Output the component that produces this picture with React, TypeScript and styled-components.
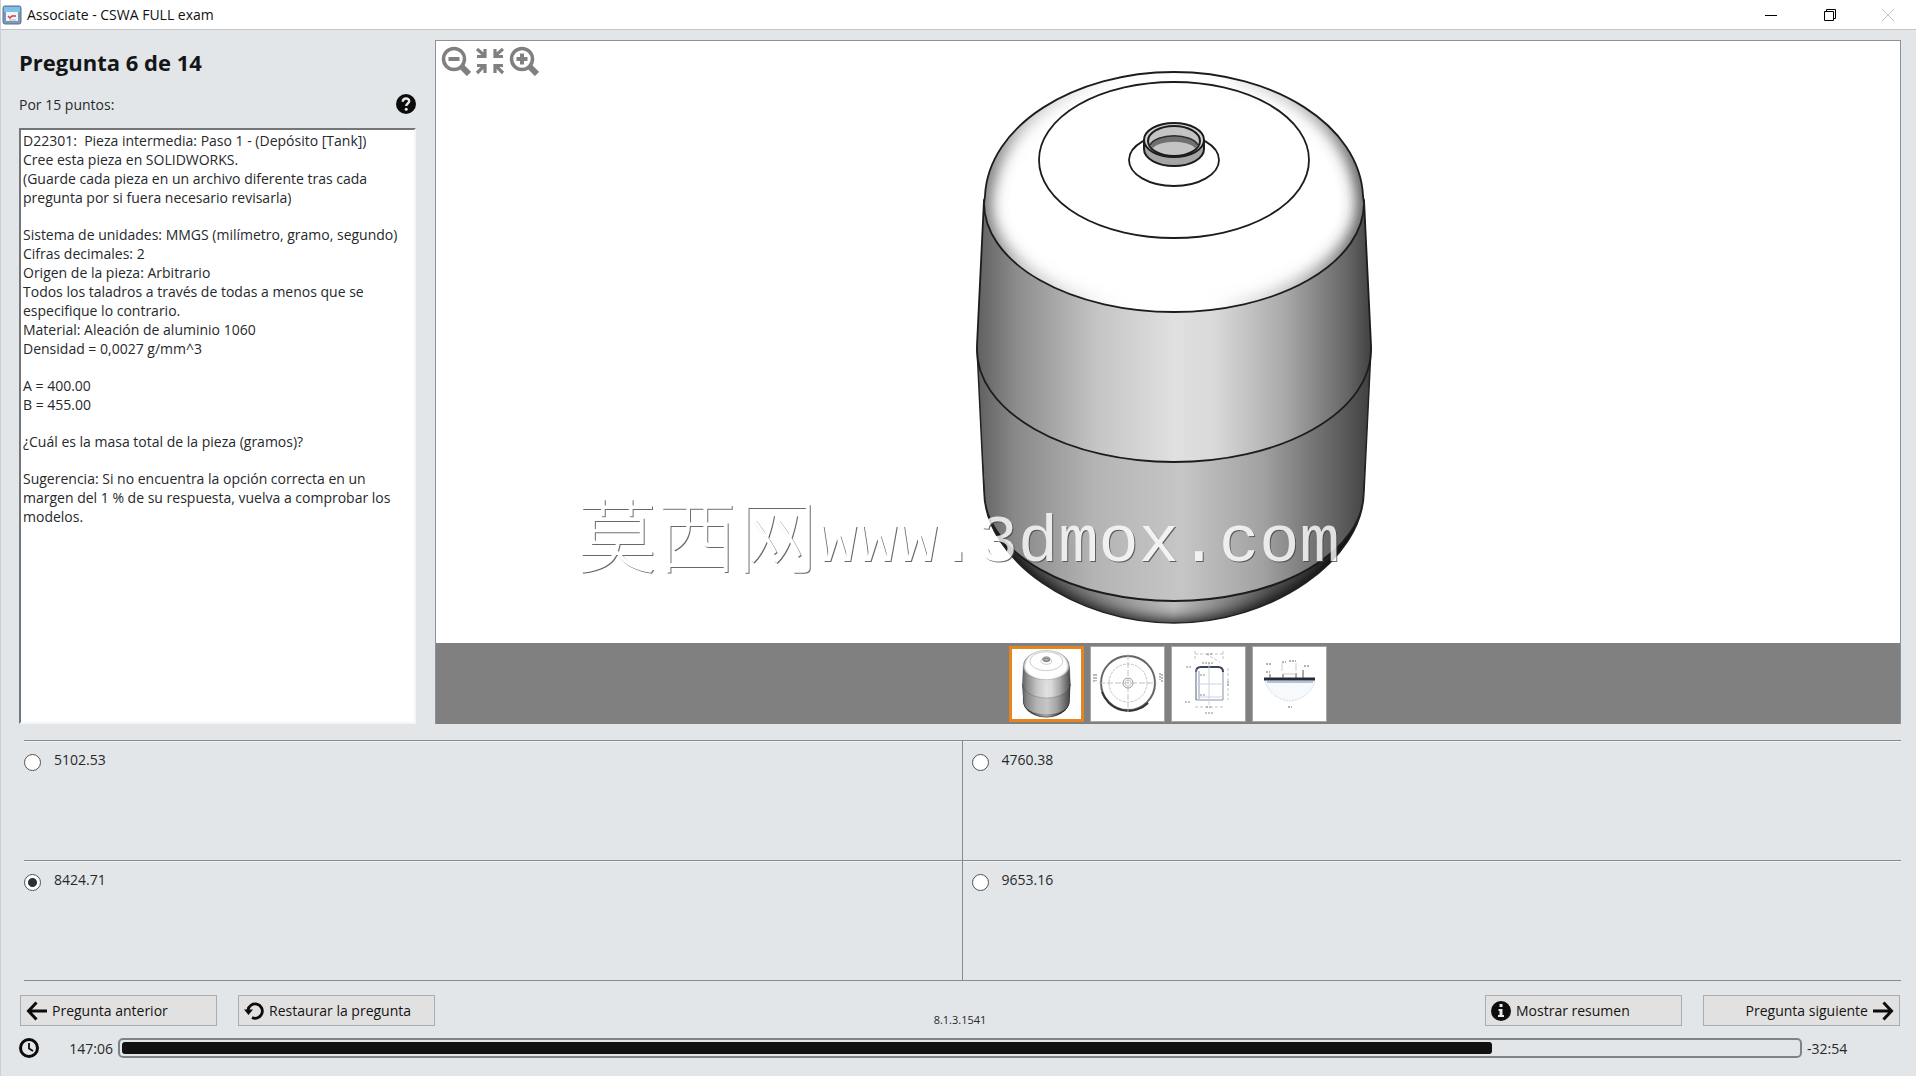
import React, { useState } from "react";
import styled, { createGlobalStyle } from "styled-components";

const GlobalStyle = createGlobalStyle`
  *, *::before, *::after { box-sizing: border-box; }
  body {
    margin: 0;
    background: #e3e6e9;
    color: #26292c;
    font-family: "Open Sans", "Noto Sans", "Noto Sans CJK SC", sans-serif;
    font-size: 14px;
    line-height: 19px;
  }
  h1, p, fieldset { margin: 0; }
  button, input { font: inherit; color: inherit; }
`;

const Window = styled.div`
  display: flex;
  flex-direction: column;
  min-height: 100vh;
  border-left: 1px solid #ccd1d5;
`;

const TitleBar = styled.header`
  display: flex;
  align-items: center;
  gap: 5px;
  height: 30px;
  padding: 0 13px 0 1px;
  background: #fff;
  border-bottom: 1px solid #c3c6c8;
  color: #111;
`;

const TitleText = styled.span`
  flex: 1;
`;

const WindowButtons = styled.div`
  display: flex;
  gap: 28px;
`;

const WindowButton = styled.button`
  display: grid;
  place-items: center;
  width: 30px;
  height: 26px;
  padding: 0;
  border: 0;
  background: none;
`;

const Content = styled.main`
  flex: 1;
  display: flex;
  flex-direction: column;
  padding: 10px 15px 18px 18px;
`;

const Workspace = styled.div`
  flex: 1;
  display: grid;
  grid-template-columns: 397px minmax(0, 1fr);
  gap: 19px;
`;

const QuestionColumn = styled.section`
  display: flex;
  flex-direction: column;
`;

const Heading = styled.h1`
  padding-top: 8px;
  font-size: 22px;
  line-height: 28px;
  font-weight: 700;
  color: #131517;
`;

const PointsRow = styled.div`
  display: flex;
  align-items: center;
  justify-content: space-between;
  height: 24px;
  margin: 16px 0 12px;
`;

const IconButton = styled.button`
  display: grid;
  place-items: center;
  padding: 0;
  border: 0;
  background: none;
`;

const QuestionBox = styled.div`
  flex: 1;
  padding: 1px 0 2px 2px;
  background: #fff;
  border: 2px solid #f3f5f6;
  border-top-color: #73777a;
  border-left-color: #73777a;
`;

const Paragraph = styled.p`
  margin-bottom: 18px;
  white-space: pre-wrap;
`;

const Viewer = styled.section`
  display: flex;
  flex-direction: column;
  border: 1px solid #8b9196;
  border-bottom: 0;
`;

const Stage = styled.div`
  position: relative;
  flex: 1;
  display: flex;
  min-height: 420px;
  background: #fff;
`;

const StageDrawing = styled.svg`
  flex: 1;
  width: 100%;
  height: auto;
`;

const ZoomTools = styled.div`
  position: absolute;
  top: 5px;
  left: 5px;
  display: flex;
  gap: 4px;
`;

const Watermark = styled.div`
  position: absolute;
  bottom: 60px;
  left: 50%;
  width: 780px;
  margin-left: -591px;
  display: flex;
  align-items: flex-start;
  color: #fff;
  opacity: 0.8;
  text-shadow: 1px 1px 0 #444;
  pointer-events: none;
  white-space: nowrap;
`;

const WatermarkHan = styled.span`
  font-family: "Noto Sans CJK SC", sans-serif;
  font-size: 80px;
  line-height: 56px;
  font-weight: 300;
`;

const WatermarkLatin = styled.span`
  font-family: "Liberation Mono", monospace;
  font-size: 67px;
  line-height: 80px;
`;

const ThumbStrip = styled.div`
  display: flex;
  justify-content: center;
  gap: 6px;
  padding: 3px 0 2px;
  background: #808080;
`;

const Thumb = styled.button<{ $active: boolean }>`
  width: 75px;
  height: 76px;
  padding: 0;
  background: #fff;
  border: ${(p) => (p.$active ? "3px solid #e5851f" : "1px solid #a8a8a8")};
  svg { display: block; width: 100%; height: 100%; }
`;

const Answers = styled.fieldset`
  display: grid;
  grid-template-columns: minmax(0, 1fr) minmax(0, 1fr);
  margin: 16px 0 0 5px;
  padding: 0;
  border: 0;
  border-top: 1px solid #868b8f;
`;

const Answer = styled.label<{ $divided: boolean }>`
  display: flex;
  align-items: flex-start;
  gap: 13px;
  height: 120px;
  padding: 9px 0 0 ${(p) => (p.$divided ? 0 : 9)}px;
  border-bottom: 1px solid #868b8f;
  border-right: ${(p) => (p.$divided ? "1px solid #868b8f" : "0")};
  box-shadow: inset 0 1px 0 #f0f2f4;
`;

const Radio = styled.input`
  appearance: none;
  width: 17px;
  height: 17px;
  margin: 4px 0 0;
  border: 1px solid #505356;
  border-radius: 50%;
  background: #fff;
  &:checked {
    background: radial-gradient(circle, #2d3033 0 4px, #fff 5px);
  }
`;

const Actions = styled.div`
  display: flex;
  justify-content: space-between;
  margin: 14px 0 12px;
  padding: 0 1px;
`;

const ActionGroup = styled.div`
  display: flex;
  gap: 21px;
`;

const ActionButton = styled.button<{ $end?: boolean }>`
  display: flex;
  align-items: center;
  justify-content: ${(p) => (p.$end ? "flex-end" : "flex-start")};
  gap: 5px;
  width: 197px;
  height: 31px;
  padding: 0 5px;
  background: #e1e1e1;
  border: 1px solid #a9adb0;
  color: #141414;
`;

const Version = styled.span`
  align-self: flex-end;
  font-size: 11px;
  line-height: 12px;
`;

const TimerRow = styled.div`
  display: flex;
  align-items: center;
  height: 20px;
  padding-right: 52px;
`;

const Elapsed = styled.span`
  width: 74px;
  margin-right: 5px;
  text-align: right;
`;

const Track = styled.div`
  flex: 1;
  height: 20px;
  padding: 2px;
  border: 2px solid #7d8488;
  border-radius: 5px;
  margin-right: 5px;
`;

const Fill = styled.div`
  height: 100%;
  border-radius: 3px;
  background: #111;
`;

const Remaining = styled.span`
  width: 42px;
`;

const AppIcon = () => (
  <svg width="20" height="20" viewBox="0 0 20 20" aria-hidden="true">
    <rect x="1" y="1" width="18" height="18" rx="2" fill="#7899b8" stroke="#59748f" />
    <rect x="2" y="2" width="16" height="5" fill="#7fc1ea" />
    <rect x="4" y="7" width="12" height="9" fill="#f4f4f6" />
    <path d="M6 11l2 2 2-2h4" fill="none" stroke="#c6404a" strokeWidth="1.500" />
    <path d="M7 15h7" stroke="#a9b6c3" />
  </svg>
);

const MinimizeIcon = () => (
  <svg width="14" height="14" viewBox="0 0 14 14" aria-hidden="true">
    <path d="M0 7.500h12" stroke="#000" />
  </svg>
);

const RestoreIcon = () => (
  <svg width="14" height="14" viewBox="0 0 14 14" fill="none" stroke="#000" aria-hidden="true">
    <path d="M1.500 3.500h9v9h-9zM3.500 3.500v-2h9v9h-2" />
  </svg>
);

const CloseIcon = () => (
  <svg width="14" height="14" viewBox="0 0 14 14" stroke="#c4c4c4" aria-hidden="true">
    <path d="M1 1l12 12M13 1L1 13" />
  </svg>
);

const HelpIcon = () => (
  <svg width="20" height="20" viewBox="0 0 20 20" aria-hidden="true">
    <circle cx="10" cy="10" r="10" fill="#0c0c0c" />
    <path d="M6.800 7.700c0-4.300 6.600-4.100 6.400-.4-.1 2.100-3 2.300-3 4.600" fill="none" stroke="#e6e8ea" strokeWidth="2.400" />
    <circle cx="10.200" cy="15.200" r="1.500" fill="#e6e8ea" />
  </svg>
);

const MagnifierIcon = ({ plus = false }: { plus?: boolean }) => (
  <svg width="30" height="30" viewBox="0 0 30 30" fill="none" stroke="#808080" aria-hidden="true">
    <circle cx="13" cy="13" r="10.500" strokeWidth="3.500" />
    <path d="M21 21l7 7" strokeWidth="6" />
    <path d={plus ? "M7.500 13h11M13 7.500v11" : "M7.500 13h11"} strokeWidth="4" />
  </svg>
);

const FitIcon = () => (
  <svg width="30" height="30" viewBox="0 0 30 30" fill="none" stroke="#808080" strokeWidth="3.200" aria-hidden="true">
    <path d="M2 3l7 6M10 3v7.500H2M28 3l-7 6M20 3v7.500h8M2 27l7-7M2 19.500h8V27M28 27l-7-7M28 19.500h-8V27" />
  </svg>
);

const ArrowIcon = ({ right = false }: { right?: boolean }) => (
  <svg width="21" height="20" viewBox="0 0 21 20" fill="none" stroke="#0c0c0c" strokeWidth="3" aria-hidden="true">
    <path d={right ? "M0 10h18M10.500 1.500l8 8.500-8 8.500" : "M21 10H3M10.500 1.500l-8 8.500 8 8.500"} />
  </svg>
);

const ResetIcon = () => (
  <svg width="20" height="20" viewBox="0 0 20 20" aria-hidden="true">
    <path d="M4 9a7.200 7.200 0 1 1 4 7.600" fill="none" stroke="#0c0c0c" strokeWidth="2.800" />
    <path d="M0 8.500h9L4.500 14z" fill="#0c0c0c" />
  </svg>
);

const InfoIcon = () => (
  <svg width="20" height="20" viewBox="0 0 20 20" aria-hidden="true">
    <circle cx="10" cy="10" r="10" fill="#0c0c0c" />
    <path d="M8.500 3h3v3h-3zM7.500 8h4v6h1.500v2h-6v-2h1.500v-4h-1z" fill="#e6e8ea" />
  </svg>
);

const ClockIcon = () => (
  <svg width="20" height="20" viewBox="0 0 20 20" fill="none" stroke="#0c0c0c" aria-hidden="true">
    <circle cx="10" cy="10" r="8.500" strokeWidth="3" />
    <path d="M10 5v5.500l4 2.500" strokeWidth="1.800" />
  </svg>
);

const SHOULDER =
  "M985 196C988 125 1075 72 1174 72S1360 125 1363 196L1364 203A190 109 0 0 1 984 203Z";
const UPPER = "M984 200L977 345V350A197 112 0 0 0 1371 350V345L1364 200Z";
const LOWER =
  "M977 348L984 492C985 560 1075 623 1174 623S1363 560 1364 492L1371 348Z";
const BASE_SEAM = "M984 492A190 109 0 0 0 1364 492";

const Tank = ({ id }: { id: string }) => (
  <g strokeLinejoin="round">
    <defs>
      <linearGradient id={`${id}-upper`}>
        <stop offset="0" stopColor="#606060" />
        <stop offset="0.1" stopColor="#8c8c8c" />
        <stop offset="0.3" stopColor="#c4c4c4" />
        <stop offset="0.5" stopColor="#e0e0e0" />
        <stop offset="0.6" stopColor="#dadada" />
        <stop offset="0.78" stopColor="#aaa" />
        <stop offset="0.94" stopColor="#666" />
        <stop offset="1" stopColor="#424242" />
      </linearGradient>
      <linearGradient id={`${id}-lower`}>
        <stop offset="0" stopColor="#5c5c5c" />
        <stop offset="0.1" stopColor="#888" />
        <stop offset="0.3" stopColor="#b4b4b4" />
        <stop offset="0.52" stopColor="#c6c6c6" />
        <stop offset="0.72" stopColor="#a2a2a2" />
        <stop offset="0.92" stopColor="#5c5c5c" />
        <stop offset="1" stopColor="#3c3c3c" />
      </linearGradient>
      <linearGradient id={`${id}-base`}>
        <stop offset="0" stopColor="#333" />
        <stop offset="0.2" stopColor="#666" />
        <stop offset="0.5" stopColor="#c0c0c0" />
        <stop offset="0.75" stopColor="#555" />
        <stop offset="1" stopColor="#222" />
      </linearGradient>
      <linearGradient id={`${id}-left`} gradientUnits="userSpaceOnUse" x1="984" y1="0" x2="1120" y2="0">
        <stop offset="0" stopColor="#555" />
        <stop offset="0.3" stopColor="#888" stopOpacity="0.6" />
        <stop offset="1" stopColor="#999" stopOpacity="0" />
      </linearGradient>
      <linearGradient id={`${id}-right`} gradientUnits="userSpaceOnUse" x1="1364" y1="0" x2="1200" y2="0">
        <stop offset="0" stopColor="#333" />
        <stop offset="0.4" stopColor="#777" stopOpacity="0.6" />
        <stop offset="1" stopColor="#999" stopOpacity="0" />
      </linearGradient>
      <filter id={`${id}-soft`} x="-20%" y="-20%" width="140%" height="140%">
        <feGaussianBlur stdDeviation="8" />
      </filter>
      <clipPath id={`${id}-shoulderClip`}>
        <path d={SHOULDER} />
      </clipPath>
      <clipPath id={`${id}-lowerClip`}>
        <path d={LOWER} />
      </clipPath>
    </defs>
    <path d={LOWER} fill={`url(#${id}-base)`} />
    <g clipPath={`url(#${id}-lowerClip)`}>
      <path
        d="M984 500C985 566 1075 629 1174 629S1363 566 1364 500"
        fill="none"
        stroke="#000"
        strokeWidth="16"
        filter={`url(#${id}-soft)`}
      />
      <path d={`${BASE_SEAM}L1374 340H974Z`} fill={`url(#${id}-lower)`} stroke="#1c1c1c" strokeWidth="2" />
    </g>
    <path d={LOWER} fill="none" stroke="#222" strokeWidth="1.500" />
    <path d={UPPER} fill={`url(#${id}-upper)`} stroke="#1c1c1c" strokeWidth="1.800" />
    <path d={SHOULDER} fill="#fff" />
    <g clipPath={`url(#${id}-shoulderClip)`}>
      <g fill="none" filter={`url(#${id}-soft)`} strokeWidth="16">
        <path d="M1120 72C1040 88 988 135 982 203A192 113 0 0 0 1120 312" stroke={`url(#${id}-left)`} />
        <path d="M1228 72C1308 88 1362 135 1366 203A192 113 0 0 1 1220 312" stroke={`url(#${id}-right)`} />
      </g>
    </g>
    <path d={SHOULDER} fill="none" stroke="#1c1c1c" strokeWidth="1.800" />
    <g fill="none" stroke="#1c1c1c" strokeWidth="1.800">
      <ellipse cx="1174" cy="160" rx="135" ry="78" />
      <ellipse cx="1174" cy="160" rx="45" ry="26" fill="#fff" />
    </g>
    <path d="M1144 140v9a30 17 0 0 0 60 0v-9z" fill="#a5a5a5" stroke="#1c1c1c" strokeWidth="2" />
    <ellipse cx="1174" cy="140" rx="30" ry="17" fill="#d4d4d4" stroke="#1c1c1c" strokeWidth="2" />
    <ellipse cx="1174" cy="141" rx="26" ry="15" fill="#c4c4c4" stroke="#1c1c1c" strokeWidth="2" />
    <path d="M1150 145a25 13 0 0 1 48 0l-3 3a22 9 0 0 0-42 0z" fill="#707070" />
    <path d="M1150 145a25 13 0 0 1 48 0" fill="none" stroke="#2c2c2c" strokeWidth="1.500" />
  </g>
);

const TopViewThumb = () => (
  <svg viewBox="0 0 73 74" fill="none" aria-hidden="true">
    <circle cx="37" cy="36" r="27" stroke="#666" strokeWidth="2" />
    <path d="M11 45a28 28 0 0 0 46 11" stroke="#333" strokeWidth="2" />
    <circle cx="37" cy="36" r="19" stroke="#c4c4c4" strokeDasharray="3 1" />
    <circle cx="37" cy="36" r="5" stroke="#999" />
    <circle cx="37" cy="36" r="3" stroke="#ccc" />
    <path d="M8 36h58M37 7v58" stroke="#c0c0c0" strokeDasharray="6 2" />
    <path d="M3 27v9M5 27v7M69 26v7M71 27v9" stroke="#777" strokeDasharray="2 1" />
  </svg>
);

const FrontViewThumb = () => (
  <svg viewBox="0 0 73 74" fill="none" aria-hidden="true">
    <path d="M24 53V24q0-4 5-4h17q5 0 5 4v29z" stroke="#8791a5" />
    <path d="M24 25q0-5 5-5h17q5 0 5 5" stroke="#3a4254" strokeWidth="2" />
    <path d="M24 22v31M27 24v28" stroke="#8d97ac" />
    <path d="M24 37h27M37 16v42M26 50h24" stroke="#c8d3e5" />
    <path d="M23 7h28M23 60h28M56 21v32M23 4v9M51 4v9M34 7l14 8" stroke="#c4c4c4" strokeDasharray="3 2" />
    <path d="M35 7h5M14 20h5M13 55h5M33 66h8M34 60h5M30 16h11M28 28h5M28 48h5M56 34v5" stroke="#888" strokeDasharray="2 1" />
  </svg>
);

const SectionThumb = () => (
  <svg viewBox="0 0 73 74" fill="none" aria-hidden="true">
    <path d="M12 34q6 18 25 20 19-2 25-20z" fill="#f7fafd" stroke="#d4d9df" strokeDasharray="2 1" />
    <path d="M11 32h51" stroke="#252b38" strokeWidth="3" />
    <path d="M14 35h46" stroke="#b8c2d4" strokeWidth="2" />
    <path d="M30 31v-4M43 31v-5M50 31v-8M17 31v-4" stroke="#555" />
    <path d="M30 27h13M29 24v-8M43 24v-8" stroke="#ccc" />
    <path d="M13 17h6M29 15h4M36 14h7M51 19h5M13 25h4M35 60h4" stroke="#666" strokeDasharray="2 1" />
  </svg>
);

const TankThumb = () => (
  <svg viewBox="955 60 440 575" aria-hidden="true">
    <Tank id="tank-thumb" />
  </svg>
);

const thumbs = [
  { name: "Vista isométrica", Drawing: TankThumb },
  { name: "Vista superior", Drawing: TopViewThumb },
  { name: "Vista frontal", Drawing: FrontViewThumb },
  { name: "Detalle de sección", Drawing: SectionThumb },
];

const question = [
  "D22301:  Pieza intermedia: Paso 1 - (Depósito [Tank])\nCree esta pieza en SOLIDWORKS.\n(Guarde cada pieza en un archivo diferente tras cada\npregunta por si fuera necesario revisarla)",
  "Sistema de unidades: MMGS (milímetro, gramo, segundo)\nCifras decimales: 2\nOrigen de la pieza: Arbitrario\nTodos los taladros a través de todas a menos que se\nespecifique lo contrario.\nMaterial: Aleación de aluminio 1060\nDensidad = 0,0027 g/mm^3",
  "A = 400.00\nB = 455.00",
  "¿Cuál es la masa total de la pieza (gramos)?",
  "Sugerencia: Si no encuentra la opción correcta en un\nmargen del 1 % de su respuesta, vuelva a comprobar los\nmodelos.",
];

const answers = ["5102.53", "4760.38", "8424.71", "9653.16"];

const ELAPSED_SECONDS = 147 * 60 + 6;
const TOTAL_SECONDS = 180 * 60;

export default function App() {
  const [selected, setSelected] = useState("8424.71");
  const [view, setView] = useState(0);

  return (
    <>
      <GlobalStyle />
      <Window>
        <TitleBar>
          <AppIcon />
          <TitleText>Associate - CSWA FULL exam</TitleText>
          <WindowButtons>
            <WindowButton aria-label="Minimizar"><MinimizeIcon /></WindowButton>
            <WindowButton aria-label="Restaurar"><RestoreIcon /></WindowButton>
            <WindowButton aria-label="Cerrar"><CloseIcon /></WindowButton>
          </WindowButtons>
        </TitleBar>
        <Content>
          <Workspace>
            <QuestionColumn>
              <Heading>Pregunta 6 de 14</Heading>
              <PointsRow>
                <span>Por 15 puntos:</span>
                <IconButton aria-label="Ayuda"><HelpIcon /></IconButton>
              </PointsRow>
              <QuestionBox>
                {question.map((text) => (
                  <Paragraph key={text}>{text}</Paragraph>
                ))}
              </QuestionBox>
            </QuestionColumn>
            <Viewer>
              <Stage>
                <StageDrawing viewBox="436 41 1464 602" role="img" aria-label="Depósito">
                  <Tank id="tank" />
                </StageDrawing>
                <Watermark>
                  <WatermarkHan>莫西网</WatermarkHan>
                  <WatermarkLatin>www.3dmox.com</WatermarkLatin>
                </Watermark>
                <ZoomTools>
                  <IconButton aria-label="Alejar"><MagnifierIcon /></IconButton>
                  <IconButton aria-label="Ajustar"><FitIcon /></IconButton>
                  <IconButton aria-label="Acercar"><MagnifierIcon plus /></IconButton>
                </ZoomTools>
              </Stage>
              <ThumbStrip>
                {thumbs.map(({ name, Drawing }, index) => (
                  <Thumb key={name} aria-label={name} $active={index === view} onClick={() => setView(index)}>
                    <Drawing />
                  </Thumb>
                ))}
              </ThumbStrip>
            </Viewer>
          </Workspace>
          <Answers aria-label="Respuestas">
            {answers.map((value, index) => (
              <Answer key={value} $divided={index % 2 === 0}>
                <Radio
                  type="radio"
                  name="answer"
                  value={value}
                  checked={selected === value}
                  onChange={() => setSelected(value)}
                />
                {value}
              </Answer>
            ))}
          </Answers>
          <Actions>
            <ActionGroup>
              <ActionButton><ArrowIcon />Pregunta anterior</ActionButton>
              <ActionButton><ResetIcon />Restaurar la pregunta</ActionButton>
            </ActionGroup>
            <Version>8.1.3.1541</Version>
            <ActionGroup>
              <ActionButton><InfoIcon />Mostrar resumen</ActionButton>
              <ActionButton $end>Pregunta siguiente<ArrowIcon right /></ActionButton>
            </ActionGroup>
          </Actions>
          <TimerRow>
            <ClockIcon />
            <Elapsed>147:06</Elapsed>
            <Track
              role="progressbar"
              aria-label="Tiempo transcurrido"
              aria-valuemin={0}
              aria-valuemax={TOTAL_SECONDS}
              aria-valuenow={ELAPSED_SECONDS}
            >
              <Fill style={{ width: `${(ELAPSED_SECONDS / TOTAL_SECONDS) * 100}%` }} />
            </Track>
            <Remaining>-32:54</Remaining>
          </TimerRow>
        </Content>
      </Window>
    </>
  );
}
